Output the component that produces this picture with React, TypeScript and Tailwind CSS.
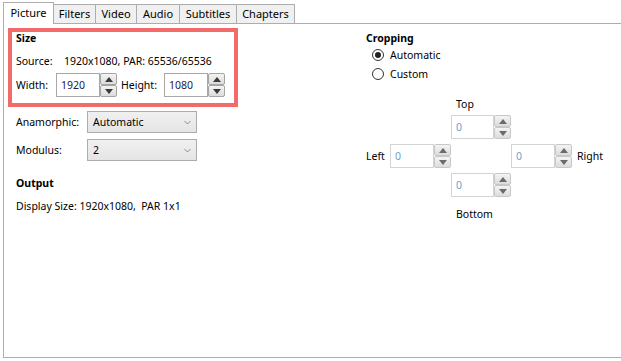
import React from "react";

const FONT = { fontFamily: '"Noto Sans", "Open Sans", sans-serif' };

function Spinner({ light }: { light?: boolean }) {
  const border = light ? "border-[#c8c8c8]" : "border-[#a5a5a5]";
  const Btn = ({ up }: { up: boolean }) => (
    <div
      className={`flex-1 flex items-center justify-center border ${border} rounded-[2px] bg-gradient-to-b from-[#f4f4f4] to-[#dcdcdc]`}
    >
      <svg width="8" height="5" viewBox="0 0 8 5">
        {up ? (
          <path d="M0 5 L4 0 L8 5 Z" fill={light ? "#6b6b6b" : "#3a3a3a"} />
        ) : (
          <path d="M0 0 L4 5 L8 0 Z" fill={light ? "#6b6b6b" : "#3a3a3a"} />
        )}
      </svg>
    </div>
  );
  return (
    <div className="w-[17px] h-full flex flex-col">
      <Btn up />
      <Btn up={false} />
    </div>
  );
}

function SpinBox({ value, light }: { value: string; light?: boolean }) {
  return (
    <div className="flex h-[24px]">
      <div
        className={`w-[44px] h-full border ${
          light ? "border-[#d3d3d3] text-[#6e9fd0]" : "border-[#a8a8a8] text-[#1e1a3e]"
        } bg-white flex items-center pl-[4px]`}
      >
        {value}
      </div>
      <Spinner light={light} />
    </div>
  );
}

function Select({ value }: { value: string }) {
  return (
    <div className="w-[110px] h-[22px] border border-[#acacac] bg-gradient-to-b from-[#f0f0f0] to-[#e5e5e5] flex items-center justify-between pl-[5px] pr-[5px]">
      <span>{value}</span>
      <svg width="7" height="5" viewBox="0 0 7 5">
        <path d="M0.5 1 L3.5 4 L6.5 1" stroke="#8a8a8a" strokeWidth="1" fill="none" />
      </svg>
    </div>
  );
}

function Radio({ checked, label }: { checked?: boolean; label: string }) {
  return (
    <div className="flex items-center h-[16px] pl-[6px]">
      <div className="w-[12px] h-[12px] rounded-full border border-[#333] bg-white flex items-center justify-center">
        {checked && <div className="w-[6px] h-[6px] rounded-full bg-[#222]" />}
      </div>
      <span className="ml-[6px]">{label}</span>
    </div>
  );
}

const tabs = [
  { label: "Picture", w: "w-[51px]" },
  { label: "Filters", w: "w-[42px]" },
  { label: "Video", w: "w-[41px]" },
  { label: "Audio", w: "w-[43px]" },
  { label: "Subtitles", w: "w-[57px]" },
  { label: "Chapters", w: "w-[58px]" },
];

export default function App() {
  return (
    <div
      className="w-[621px] h-[361px] bg-white text-black text-[10.5px] leading-[14px] overflow-hidden"
      style={FONT}
    >
      {/* Tab strip */}
      <div className="flex items-end h-[24px] pl-[3px] relative z-10">
        {tabs.map((t, i) =>
          i === 0 ? (
            <div
              key={t.label}
              className={`${t.w} h-[22px] border border-b-0 border-[#adadad] bg-white flex items-center justify-center text-[11px] pb-[1px]`}
            >
              {t.label}
            </div>
          ) : (
            <div
              key={t.label}
              className={`${t.w} h-[19px] border border-l-0 border-b-0 border-[#adadad] bg-[#f0f0f0] flex items-center justify-center text-[11px] mb-px`}
            >
              {t.label}
            </div>
          )
        )}
      </div>
      {/* Panel */}
      <div className="ml-[3px] -mt-px h-[335px] border-l border-t border-b border-[#adadad] flex pt-[4px] pl-[4px]">
        {/* Left column */}
        <div className="w-[358px] flex flex-col">
          <div className="w-[230px] h-[79px] border-[4px] border-[#f26a6a] pl-[4px] flex flex-col">
            <div className="font-bold h-[14px] mt-[-1px]">Size</div>
            <div className="flex h-[14px] mt-[9px]">
              <span className="w-[48px]">Source:</span>
              <span>1920x1080, PAR: 65536/65536</span>
            </div>
            <div className="flex items-center h-[24px] mt-[5px]">
              <span className="w-[40px]">Width:</span>
              <SpinBox value="1920" />
              <span className="ml-[4px] w-[43px]">Height:</span>
              <SpinBox value="1080" />
            </div>
          </div>
          <div className="flex items-center mt-[4px] pl-[8px]">
            <span className="w-[71px]">Anamorphic:</span>
            <Select value="Automatic" />
          </div>
          <div className="flex items-center mt-[6px] pl-[8px]">
            <span className="w-[71px]">Modulus:</span>
            <Select value="2" />
          </div>
          <div className="font-bold mt-[15px] pl-[8px]">Output</div>
          <div className="mt-[9px] pl-[8px]">Display Size: 1920x1080,&nbsp; PAR 1x1</div>
        </div>
        {/* Right column */}
        <div className="flex flex-col">
          <div className="font-bold mt-[3px]">Cropping</div>
          <div className="mt-[2px]">
            <Radio checked label="Automatic" />
          </div>
          <div className="mt-[3px]">
            <Radio label="Custom" />
          </div>
          <div className="grid grid-cols-[85px_60px_auto] mt-[15px]">
            <div />
            <div className="pl-[5px] h-[14px]">Top</div>
            <div />
            <div />
            <div className="mt-[4px]">
              <SpinBox value="0" light />
            </div>
            <div />
            <div className="flex items-center mt-[5px]">
              <span className="w-[24px]">Left</span>
              <SpinBox value="0" light />
            </div>
            <div />
            <div className="flex items-center mt-[5px]">
              <SpinBox value="0" light />
              <span className="ml-[5px]">Right</span>
            </div>
            <div />
            <div className="mt-[5px]">
              <SpinBox value="0" light />
            </div>
            <div />
            <div />
            <div className="pl-[5px] mt-[10px]">Bottom</div>
            <div />
          </div>
        </div>
      </div>
    </div>
  );
}
